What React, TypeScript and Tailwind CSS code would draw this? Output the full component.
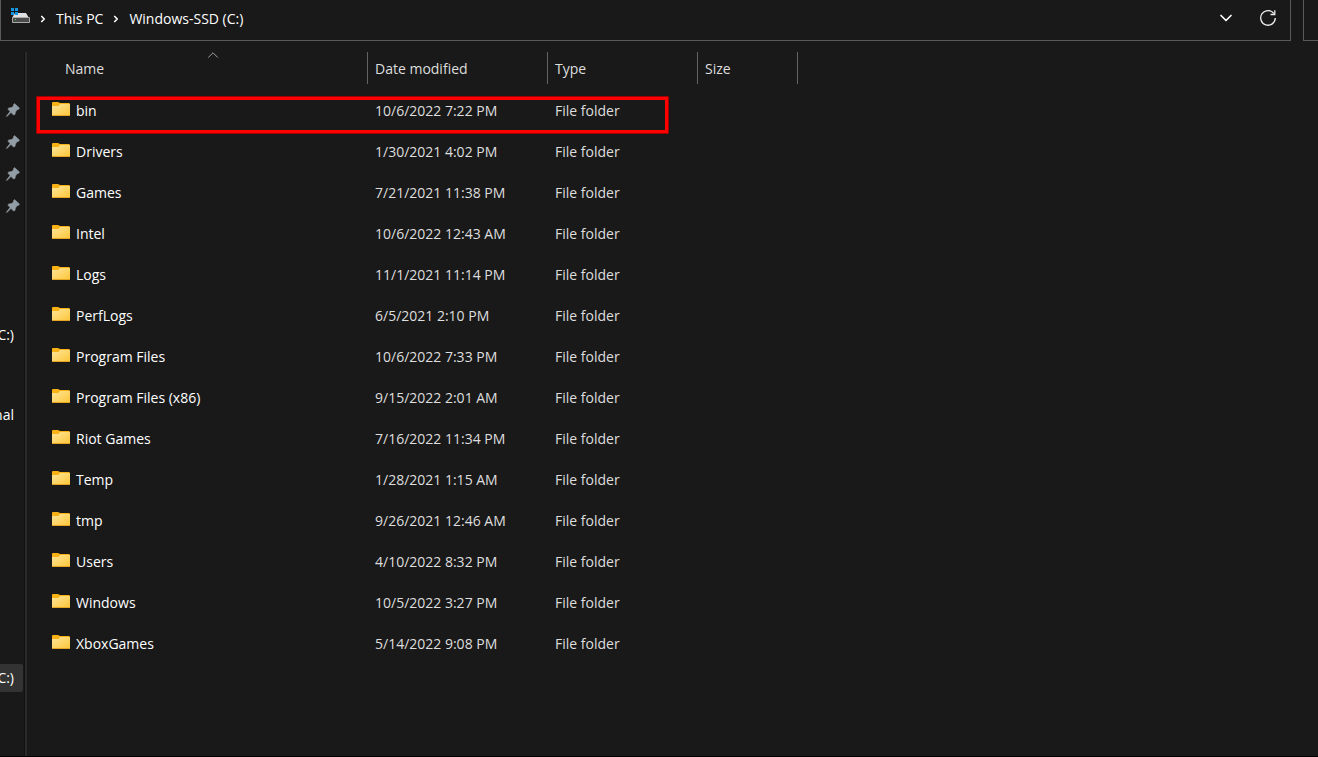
import { ChevronDown, ChevronRight, ChevronUp } from "lucide-react";

const folders = [
  { name: "bin", modified: "10/6/2022 7:22 PM" },
  { name: "Drivers", modified: "1/30/2021 4:02 PM" },
  { name: "Games", modified: "7/21/2021 11:38 PM" },
  { name: "Intel", modified: "10/6/2022 12:43 AM" },
  { name: "Logs", modified: "11/1/2021 11:14 PM" },
  { name: "PerfLogs", modified: "6/5/2021 2:10 PM" },
  { name: "Program Files", modified: "10/6/2022 7:33 PM" },
  { name: "Program Files (x86)", modified: "9/15/2022 2:01 AM" },
  { name: "Riot Games", modified: "7/16/2022 11:34 PM" },
  { name: "Temp", modified: "1/28/2021 1:15 AM" },
  { name: "tmp", modified: "9/26/2021 12:46 AM" },
  { name: "Users", modified: "4/10/2022 8:32 PM" },
  { name: "Windows", modified: "10/5/2022 3:27 PM" },
  { name: "XboxGames", modified: "5/14/2022 9:08 PM" },
];

function FolderIcon() {
  return (
    <svg width="18" height="14" viewBox="0 0 18 14" className="-mt-1 shrink-0">
      <defs>
        <linearGradient id="folder" x1="0" y1="0" x2="1" y2="1">
          <stop offset="0" stopColor="#ffe59a" />
          <stop offset="1" stopColor="#fdc638" />
        </linearGradient>
      </defs>
      <path d="M0 1Q0 0 1 0H6L8 1H17Q18 1 18 3V8H0Z" fill="#f9b216" />
      <path d="M0 4H6.500L8 2H18V13Q18 14 17 14H1Q0 14 0 13Z" fill="url(#folder)" />
      <path d="M0 13H18Q18 14 17 14H1Q0 14 0 13Z" fill="#e5a421" />
    </svg>
  );
}

function DriveIcon() {
  return (
    <svg width="19" height="16" viewBox="0 0 19 16">
      <path d="M4 5H15L18 10H1Z" fill="#dedfe3" />
      <rect x="1" y="9" width="18" height="6" rx="1" fill="#aaaaaa" />
      <rect x="2" y="10" width="16" height="4" fill="#4a4a4a" />
      <rect x="4" y="11" width="1" height="1" fill="#4be36b" />
      <path d="M0 0H3V3H0ZM4 0H7V3H4ZM0 4H3V7H0ZM4 4H7V7H4Z" fill="#1496e0" />
    </svg>
  );
}

function PinIcon() {
  return (
    <svg width="14" height="14" viewBox="0 0 14 14">
      <path
        d="M8.500 0.500L13.500 5L12.500 6.500L11 6.800L9.500 9L9 11.500L7.500 12L5 9.500L1 13.500L0.300 13.200L4 8.500L2 6.300L2.500 5L5.500 4.500L7.500 3L7.600 1.300Z"
        fill="#939da5"
        stroke="#939da5"
        strokeWidth="0.500"
      />
    </svg>
  );
}

function RefreshIcon() {
  return (
    <svg
      width="16"
      height="16"
      viewBox="0 0 16 16"
      fill="none"
      stroke="#ededed"
      strokeWidth="1.300"
    >
      <path d="M13.800 3.500A7.300 7.300 0 1 0 15.300 8" />
      <path d="M14.800 0.300V4.500H10.500" />
    </svg>
  );
}

function AddressBar() {
  return (
    <header className="flex h-[41px] gap-3 text-white">
      <div className="flex flex-1 items-start border-x border-b border-[#5a5a5a] pl-2.5 pr-3.5">
        <nav
          aria-label="Address"
          className="flex h-[38px] flex-1 items-center gap-2"
        >
          <span className="-mt-1.5 flex">
            <DriveIcon />
          </span>
          <ChevronRight size={10} strokeWidth={4} />
          <a href="#this-pc">This PC</a>
          <ChevronRight size={10} strokeWidth={4} />
          <a href="#c">Windows-SSD (C:)</a>
        </nav>
        <div className="flex h-9 items-center gap-6">
          <button aria-label="Previous locations">
            <ChevronDown size={20} strokeWidth={2} />
          </button>
          <button aria-label="Refresh">
            <RefreshIcon />
          </button>
        </div>
      </div>
      <div className="w-[15px] border-b border-l border-[#5a5a5a]" />
    </header>
  );
}

function Sidebar() {
  return (
    <aside className="flex w-[23px] shrink-0 flex-col overflow-hidden pt-[53px] text-white">
      {["Desktop", "Downloads", "Documents", "Pictures"].map((item) => (
        <button
          key={item}
          aria-label={item}
          className="flex h-8 w-full items-center justify-center pl-0.5"
        >
          <PinIcon />
        </button>
      ))}
      <a href="#c" className="mt-[99px] flex h-7 items-center justify-end pr-[9px]">
        C:)
      </a>
      <a href="#d" className="mt-[52px] flex h-7 items-center justify-end pr-[9px]">
        nal
      </a>
      <a
        href="#c"
        className="mt-[235px] flex h-7 items-center justify-end rounded-r-xs bg-[#333333] pr-[9px]"
      >
        C:)
      </a>
    </aside>
  );
}

function HeaderCell({ label, sorted }: { label: string; sorted?: boolean }) {
  return (
    <th className="p-0 pb-1.5 text-left font-normal">
      <div
        className={`relative flex h-8 items-center border-r border-[#636363] pt-0.5 ${
          sorted ? "pl-[37px]" : "pl-[7px]"
        }`}
      >
        {label}
        {sorted && (
          <ChevronUp
            size={18}
            strokeWidth={1}
            className="absolute -top-1.5 left-44 text-[#c8c8c8]"
          />
        )}
      </div>
    </th>
  );
}

const App = () => {
  return (
    <div className="flex min-h-screen flex-col border-b border-black bg-[#191919] font-['Open_Sans','Noto_Sans',sans-serif] text-sm text-[#dedede]">
      <AddressBar />
      <div className="flex flex-1">
        <Sidebar />
        <div className="mt-[11px] mr-px ml-px w-[3px] shrink-0 border-l border-[#121212] bg-[#2b2b2b]" />
        <main className="relative flex-1 pt-[11px]">
          <table className="w-[770px] table-fixed border-collapse">
            <colgroup>
              <col className="w-[340px]" />
              <col className="w-[180px]" />
              <col className="w-[150px]" />
              <col className="w-[100px]" />
            </colgroup>
            <thead>
              <tr>
                <HeaderCell label="Name" sorted />
                <HeaderCell label="Date modified" />
                <HeaderCell label="Type" />
                <HeaderCell label="Size" />
              </tr>
            </thead>
            <tbody>
              {folders.map((folder) => (
                <tr key={folder.name} className="h-[41px]">
                  <td className="p-0 pl-6">
                    <div className="flex items-center gap-1.5 text-white">
                      <FolderIcon />
                      {folder.name}
                    </div>
                  </td>
                  <td className="p-0 pl-[7px]">{folder.modified}</td>
                  <td className="p-0 pl-[7px]">File folder</td>
                  <td />
                </tr>
              ))}
            </tbody>
          </table>
          {/* marks the bin folder */}
          <div className="pointer-events-none absolute top-[55px] left-2 h-[38px] w-[633px] rounded-xs border-4 border-[#fe0000] outline -outline-offset-1 outline-[#a00000]" />
        </main>
      </div>
    </div>
  );
};

export default App;
